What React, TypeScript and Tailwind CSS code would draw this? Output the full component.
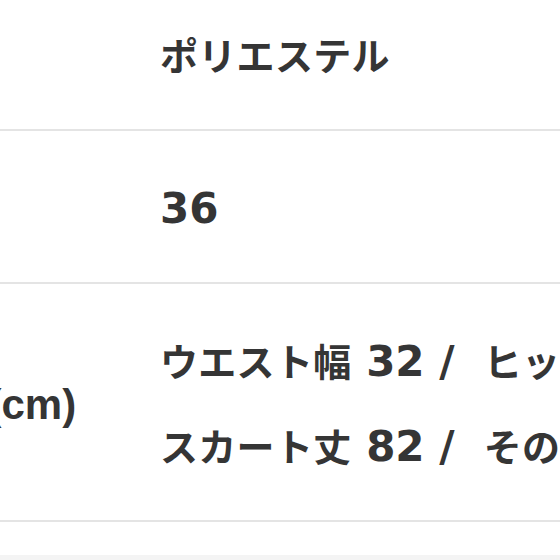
import React from "react";

const rows: { label: string; lines: string[] }[] = [
  { label: "素材", lines: ["ポリエステル"] },
  { label: "サイズ", lines: ["36"] },
  {
    label: "平置き実寸(cm)",
    lines: [
      "ウエスト幅 32 /\u00a0 ヒップ幅 47 /\u00a0 股上 30",
      "スカート丈 82 /\u00a0 その他 -",
    ],
  },
];

const CJK = /[\u3000-\u9fff\uff00-\uffef]/;

function Mixed({ text, latin }: { text: string; latin: string }) {
  const parts = text.match(/[\u3000-\u9fff\uff00-\uffef]+|[^\u3000-\u9fff\uff00-\uffef]+/g) || [];
  return (
    <>
      {parts.map((p, i) =>
        CJK.test(p) ? (
          <span key={i} className="text-[38px] leading-none tracking-[0.3px]">
            {p}
          </span>
        ) : (
          <span key={i} className={latin}>
            {p}
          </span>
        )
      )}
    </>
  );
}

const ff = { fontFamily: '"Noto Sans CJK JP", sans-serif' };
const labelLatin = "text-[42px] leading-none font-['Liberation_Sans','Noto_Sans_CJK_JP',sans-serif]";
const valueLatin = "text-[42px] leading-none font-['DejaVu_Sans','Noto_Sans_CJK_JP',sans-serif]";

export default function App() {
  return (
    <div className="w-[560px] h-[560px] overflow-hidden bg-white text-[#353535]" style={ff}>
      <div className="-mt-[22px] -ml-[204px] flex flex-col">
        {rows.map((r) => (
          <div key={r.label} className="flex border-b-2 border-[#e4e4e4] py-[33px]">
            <div className="w-[364px] shrink-0 self-center whitespace-nowrap font-bold text-[38px] h-[85px] leading-[85px]">
              <Mixed text={r.label} latin={labelLatin} />
            </div>
            <div className="flex flex-col whitespace-nowrap font-bold">
              {r.lines.map((l) => (
                <div key={l} className="text-[38px] h-[85px] leading-[85px]">
                  <Mixed text={l} latin={valueLatin} />
                </div>
              ))}
            </div>
          </div>
        ))}
        <div className="h-[33px]" />
        <div className="h-[40px] bg-[#f4f4f4]" />
      </div>
    </div>
  );
}
